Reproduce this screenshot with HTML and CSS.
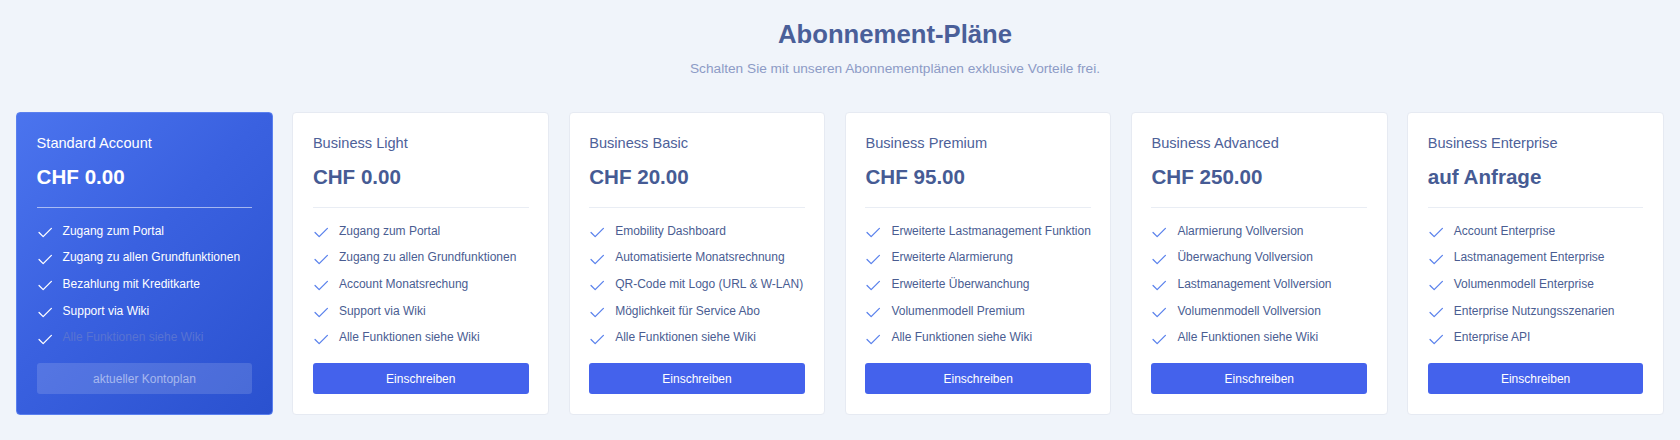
FILE: index.html
```html
<!DOCTYPE html>
<html lang="de">
<head>
<meta charset="utf-8">
<title>Abonnement-Pläne</title>
<link rel="stylesheet" href="styles.css">
</head>
<body>
<header class="intro">
  <h1 class="intro-title">Abonnement-Pläne</h1>
  <p class="intro-sub">Schalten Sie mit unseren Abonnementplänen exklusive Vorteile frei.</p>
</header>
<main class="plans">
  <section class="plan plan-current">
    <h2 class="plan-name">Standard Account</h2>
    <div class="plan-price">CHF 0.00</div>
    <ul class="features">
      <li><svg class="check" viewBox="0 0 16 12"><polyline points="1.5,6 6,10.5 15,1.5"/></svg>Zugang zum Portal</li>
      <li><svg class="check" viewBox="0 0 16 12"><polyline points="1.5,6 6,10.5 15,1.5"/></svg>Zugang zu allen Grundfunktionen</li>
      <li><svg class="check" viewBox="0 0 16 12"><polyline points="1.5,6 6,10.5 15,1.5"/></svg>Bezahlung mit Kreditkarte</li>
      <li><svg class="check" viewBox="0 0 16 12"><polyline points="1.5,6 6,10.5 15,1.5"/></svg>Support via Wiki</li>
      <li class="muted"><svg class="check" viewBox="0 0 16 12"><polyline points="1.5,6 6,10.5 15,1.5"/></svg>Alle Funktionen siehe Wiki</li>
    </ul>
    <button class="btn btn-current" type="button">aktueller Kontoplan</button>
  </section>
  <section class="plan">
    <h2 class="plan-name">Business Light</h2>
    <div class="plan-price">CHF 0.00</div>
    <ul class="features">
      <li><svg class="check" viewBox="0 0 16 12"><polyline points="1.5,6 6,10.5 15,1.5"/></svg>Zugang zum Portal</li>
      <li><svg class="check" viewBox="0 0 16 12"><polyline points="1.5,6 6,10.5 15,1.5"/></svg>Zugang zu allen Grundfunktionen</li>
      <li><svg class="check" viewBox="0 0 16 12"><polyline points="1.5,6 6,10.5 15,1.5"/></svg>Account Monatsrechung</li>
      <li><svg class="check" viewBox="0 0 16 12"><polyline points="1.5,6 6,10.5 15,1.5"/></svg>Support via Wiki</li>
      <li><svg class="check" viewBox="0 0 16 12"><polyline points="1.5,6 6,10.5 15,1.5"/></svg>Alle Funktionen siehe Wiki</li>
    </ul>
    <button class="btn" type="button">Einschreiben</button>
  </section>
  <section class="plan">
    <h2 class="plan-name">Business Basic</h2>
    <div class="plan-price">CHF 20.00</div>
    <ul class="features">
      <li><svg class="check" viewBox="0 0 16 12"><polyline points="1.5,6 6,10.5 15,1.5"/></svg>Emobility Dashboard</li>
      <li><svg class="check" viewBox="0 0 16 12"><polyline points="1.5,6 6,10.5 15,1.5"/></svg>Automatisierte Monatsrechnung</li>
      <li><svg class="check" viewBox="0 0 16 12"><polyline points="1.5,6 6,10.5 15,1.5"/></svg>QR-Code mit Logo (URL &amp; W-LAN)</li>
      <li><svg class="check" viewBox="0 0 16 12"><polyline points="1.5,6 6,10.5 15,1.5"/></svg>Möglichkeit für Service Abo</li>
      <li><svg class="check" viewBox="0 0 16 12"><polyline points="1.5,6 6,10.5 15,1.5"/></svg>Alle Funktionen siehe Wiki</li>
    </ul>
    <button class="btn" type="button">Einschreiben</button>
  </section>
  <section class="plan">
    <h2 class="plan-name">Business Premium</h2>
    <div class="plan-price">CHF 95.00</div>
    <ul class="features">
      <li><svg class="check" viewBox="0 0 16 12"><polyline points="1.5,6 6,10.5 15,1.5"/></svg>Erweiterte Lastmanagement Funktion</li>
      <li><svg class="check" viewBox="0 0 16 12"><polyline points="1.5,6 6,10.5 15,1.5"/></svg>Erweiterte Alarmierung</li>
      <li><svg class="check" viewBox="0 0 16 12"><polyline points="1.5,6 6,10.5 15,1.5"/></svg>Erweiterte Überwanchung</li>
      <li><svg class="check" viewBox="0 0 16 12"><polyline points="1.5,6 6,10.5 15,1.5"/></svg>Volumenmodell Premium</li>
      <li><svg class="check" viewBox="0 0 16 12"><polyline points="1.5,6 6,10.5 15,1.5"/></svg>Alle Funktionen siehe Wiki</li>
    </ul>
    <button class="btn" type="button">Einschreiben</button>
  </section>
  <section class="plan">
    <h2 class="plan-name">Business Advanced</h2>
    <div class="plan-price">CHF 250.00</div>
    <ul class="features">
      <li><svg class="check" viewBox="0 0 16 12"><polyline points="1.5,6 6,10.5 15,1.5"/></svg>Alarmierung Vollversion</li>
      <li><svg class="check" viewBox="0 0 16 12"><polyline points="1.5,6 6,10.5 15,1.5"/></svg>Überwachung Vollversion</li>
      <li><svg class="check" viewBox="0 0 16 12"><polyline points="1.5,6 6,10.5 15,1.5"/></svg>Lastmanagement Vollversion</li>
      <li><svg class="check" viewBox="0 0 16 12"><polyline points="1.5,6 6,10.5 15,1.5"/></svg>Volumenmodell Vollversion</li>
      <li><svg class="check" viewBox="0 0 16 12"><polyline points="1.5,6 6,10.5 15,1.5"/></svg>Alle Funktionen siehe Wiki</li>
    </ul>
    <button class="btn" type="button">Einschreiben</button>
  </section>
  <section class="plan">
    <h2 class="plan-name">Business Enterprise</h2>
    <div class="plan-price">auf Anfrage</div>
    <ul class="features">
      <li><svg class="check" viewBox="0 0 16 12"><polyline points="1.5,6 6,10.5 15,1.5"/></svg>Account Enterprise</li>
      <li><svg class="check" viewBox="0 0 16 12"><polyline points="1.5,6 6,10.5 15,1.5"/></svg>Lastmanagement Enterprise</li>
      <li><svg class="check" viewBox="0 0 16 12"><polyline points="1.5,6 6,10.5 15,1.5"/></svg>Volumenmodell Enterprise</li>
      <li><svg class="check" viewBox="0 0 16 12"><polyline points="1.5,6 6,10.5 15,1.5"/></svg>Enterprise Nutzungsszenarien</li>
      <li><svg class="check" viewBox="0 0 16 12"><polyline points="1.5,6 6,10.5 15,1.5"/></svg>Enterprise API</li>
    </ul>
    <button class="btn" type="button">Einschreiben</button>
  </section>
</main>
</body>
</html>
```

FILE: styles.css
```css
* { box-sizing: border-box; }

html, body {
  margin: 0;
  padding: 0;
}

body {
  background: #f0f4fa;
  font-family: "Liberation Sans", Arial, sans-serif;
  color: #4a5d94;
  width: 1680px;
  height: 440px;
  overflow: hidden;
}

.intro {
  text-align: center;
  padding-top: 18px;
  padding-left: 110px;
}

.intro-title {
  margin: 0;
  font-size: 25.7px;
  line-height: 32px;
  font-weight: bold;
  color: #4a5f99;
}

.intro-sub {
  margin: 11px 0 0;
  font-size: 13.7px;
  line-height: 16px;
  color: #8d9bc6;
}

.plans {
  display: flex;
  gap: 19.4px;
  padding: 0 16px 0 16px;
  margin-top: 35px;
}

.plan {
  flex: 1 1 0;
  background: #ffffff;
  border: 1px solid #e6eaf2;
  border-radius: 4px;
  padding: 19.6px 19.6px 19.6px;
  display: flex;
  flex-direction: column;
  height: 303px;
}

.plan-current {
  background: linear-gradient(135deg, #4b74ee 0%, #3a61e0 45%, #2a51cf 100%);
  border-color: #5b80ee;
  color: #ffffff;
}

.plan-name {
  margin: 0;
  font-size: 14.6px;
  line-height: 20px;
  font-weight: normal;
  color: #4d6199;
}

.plan-current .plan-name { color: #ffffff; }

.plan-price {
  margin-top: 11px;
  font-size: 20.6px;
  line-height: 26px;
  font-weight: bold;
  color: #465b94;
  padding-bottom: 17px;
  border-bottom: 1px solid #e9edf4;
}

.plan-current .plan-price {
  color: #ffffff;
  border-bottom-color: rgba(255, 255, 255, 0.55);
}

.features {
  list-style: none;
  margin: 14px 0 0;
  padding: 0;
  display: flex;
  flex-direction: column;
  gap: 8.67px;
}

.features li {
  display: flex;
  align-items: center;
  gap: 10px;
  font-size: 12px;
  line-height: 18px;
  white-space: nowrap;
  color: #4a5d92;
}

.plan-current .features li { color: #ffffff; }
.plan-current .features li.muted { color: #5873d2; }

.check {
  width: 16px;
  height: 11px;
  flex: none;
  margin-top: 4px;
  fill: none;
  stroke: #5b82ec;
  stroke-width: 1.4;
  stroke-linecap: round;
  stroke-linejoin: round;
}

.plan-current .check { stroke: #ffffff; }

.btn {
  margin-top: auto;
  height: 31px;
  width: 100%;
  border: none;
  border-radius: 3px;
  background: #4462ec;
  color: #ffffff;
  font-family: "Liberation Sans", Arial, sans-serif;
  font-size: 12px;
}

.btn-current {
  background: rgba(255, 255, 255, 0.14);
  color: rgba(255, 255, 255, 0.5);
}
```
